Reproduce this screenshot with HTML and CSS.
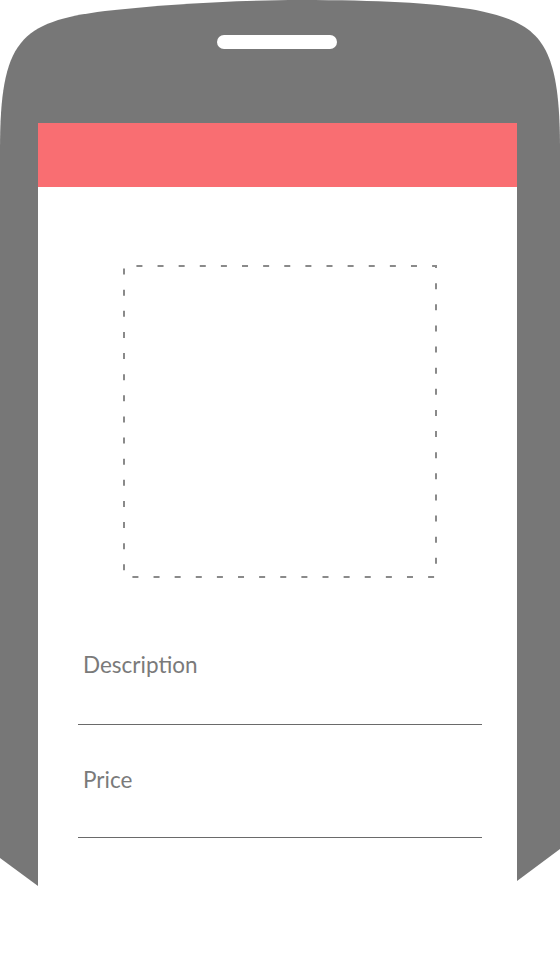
FILE: index.html
```html
<!DOCTYPE html>
<html lang="en">
<head>
<meta charset="utf-8">
<title>Product</title>
<link rel="stylesheet" href="styles.css">
</head>
<body>
<div class="phone">
  <svg class="frame" width="560" height="956" viewBox="0 0 560 956" aria-hidden="true">
    <path class="body" d="M0,858 L0,150 C0,40 20,22 105,11 C165,4 240,0 300,0 C380,0 430,3 470,9 C540,22 560,40 560,150 L560,849 L517,881 L38,886 Z"/>
    <rect class="speaker" x="217" y="35" width="120" height="14" rx="7" ry="7"/>
  </svg>
  <main class="screen">
    <header class="appbar"></header>
    <div class="photo">
      <svg width="314" height="313" viewBox="0 0 314 313" aria-hidden="true">
        <rect x="1" y="1" width="312" height="311" class="dash"/>
      </svg>
    </div>
    <div class="fields">
      <div class="field">Description</div>
      <div class="field field-price">Price</div>
    </div>
  </main>
</div>
</body>
</html>
```

FILE: styles.css
```css
html, body {
  margin: 0;
  padding: 0;
  background: #ffffff;
}
body {
  width: 560px;
  height: 956px;
  overflow: hidden;
  font-family: Lato, "Open Sans", "Liberation Sans", sans-serif;
}
.phone {
  position: relative;
  width: 560px;
  height: 956px;
  padding-top: 123px;
  box-sizing: border-box;
}
.frame {
  position: absolute;
  top: 0;
  left: 0;
  z-index: 0;
}
.frame .body {
  fill: #777777;
}
.frame .speaker {
  fill: #ffffff;
}
.screen {
  position: relative;
  z-index: 1;
  display: block;
  margin-left: 38px;
  width: 479px;
  height: 833px;
  background: #ffffff;
}
.appbar {
  height: 64px;
  background: #f96e72;
}
.photo {
  margin: 78px 0 0 85px;
  width: 314px;
  height: 313px;
}
.photo svg {
  display: block;
}
.dash {
  fill: none;
  stroke: #8a8a8a;
  stroke-width: 2;
  stroke-dasharray: 6 15.12;
  stroke-dashoffset: 8.7;
}
.fields {
  margin: 74px 0 0 40px;
  width: 404px;
  display: flex;
  flex-direction: column;
  gap: 42px;
}
.field {
  font-size: 22.5px;
  line-height: 25px;
  color: #7a7a7a;
  padding: 0 0 47px 5px;
  border-bottom: 1px solid #6a6a6a;
}
.field-price {
  padding-bottom: 45px;
}
```
